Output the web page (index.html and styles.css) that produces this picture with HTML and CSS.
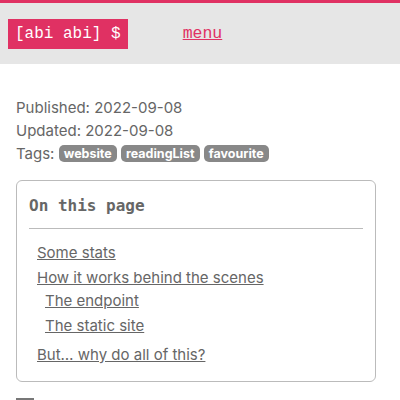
FILE: index.html
```html
<!DOCTYPE html>
<html>
<head>
<meta charset="utf-8">
<link rel="stylesheet" href="styles.css">
</head>
<body>
<header class="site-header">
  <a class="logo" href="#">[abi abi] $</a>
  <a class="menu" href="#">menu</a>
</header>
<main class="content">
  <div class="meta">
    <div>Published: 2022-09-08</div>
    <div>Updated: 2022-09-08</div>
    <div>Tags: <span class="tag">website</span> <span class="tag">readingList</span> <span class="tag">favourite</span></div>
  </div>
  <nav class="toc">
    <div class="toc-title">On this page</div>
    <hr class="toc-rule">
    <ul class="toc-list">
      <li><a href="#">Some stats</a></li>
      <li><a href="#">How it works behind the scenes</a>
        <ul class="toc-sub">
          <li><a href="#">The endpoint</a></li>
          <li><a href="#">The static site</a></li>
        </ul>
      </li>
      <li><a href="#">But… why do all of this?</a></li>
    </ul>
  </nav>
  <div class="block"></div>
</main>
</body>
</html>
```
FILE: styles.css
```css
html, body {
  margin: 0;
  padding: 0;
  background: #fff;
}
body {
  font-family: Inter, "Noto Sans", sans-serif;
  font-size: 15px;
  color: #666;
  overflow: hidden;
}
.site-header {
  border-top: 3px solid #e03163;
  background: #e6e6e6;
  height: 64px;
  box-sizing: border-box;
  padding: 16px 8px 0;
  display: flex;
  align-items: flex-start;
}
.logo {
  background: #e03163;
  color: #fff;
  font-family: "Liberation Mono", monospace;
  font-size: 16px;
  line-height: 30px;
  height: 30px;
  padding: 0 7px;
  text-decoration: none;
  white-space: pre;
}
.menu {
  margin-left: 55px;
  color: #e03163;
  font-family: "Liberation Mono", monospace;
  font-size: 16.5px;
  line-height: 30px;
  text-decoration: underline;
}
.content {
  padding: 32px 24px 0 16px;
}
.meta {
  line-height: 23px;
}
.tag {
  display: inline-block;
  background: #888;
  color: #fff;
  font-weight: 700;
  font-size: 12.5px;
  line-height: 17px;
  padding: 0 5px;
  border-radius: 5px;
  vertical-align: 1px;
}
.toc {
  margin-top: 15px;
  border: 1px solid #bbb;
  border-radius: 6px;
  padding: 13px 12px 15px;
}
.toc-title {
  font-family: "DejaVu Sans Mono", monospace;
  font-weight: 700;
  font-size: 16px;
  line-height: 24px;
  color: #666;
}
.toc-rule {
  border: 0;
  border-top: 1px solid #bbb;
  margin: 10px 0 12px;
}
.toc-list, .toc-sub {
  list-style: none;
  margin: 0;
  padding: 0 0 0 8px;
}
.toc-list li {
  line-height: 23px;
  margin-top: 2px;
}
.toc-sub li:first-child {
  margin-top: 0;
}
.toc-sub {
  margin-bottom: 6px;
}
.toc-list a {
  color: #666;
  text-decoration: underline;
}
.block {
  margin-top: 16px;
  width: 18px;
  height: 18px;
  background: #777;
}
```
